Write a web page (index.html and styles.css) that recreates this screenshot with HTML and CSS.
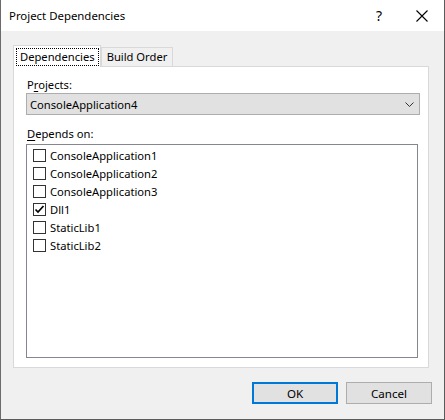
FILE: index.html
```html
<!DOCTYPE html>
<html>
<head>
<meta charset="utf-8">
<link rel="stylesheet" href="styles.css">
</head>
<body>
<div class="window">
  <div class="titlebar">
    <span class="title">Project Dependencies</span>
    <span class="help">?</span>
    <svg class="close" width="12" height="12" viewBox="0 0 12 12"><path d="M0.5 0.5 L11.5 11.5 M11.5 0.5 L0.5 11.5" stroke="#000" stroke-width="1.1" fill="none"/></svg>
  </div>
  <div class="body">
    <div class="tabs">
      <div class="tab active"><span class="focus">Dependencies</span></div>
      <div class="tab">Build Order</div>
    </div>
    <div class="panel">
      <div class="label">P<u>r</u>ojects:</div>
      <div class="combo">
        <span>ConsoleApplication4</span>
        <svg class="chev" width="9" height="5" viewBox="0 0 9 5"><path d="M0.5 0.5 L4.5 4.5 L8.5 0.5" stroke="#333" stroke-width="1" fill="none"/></svg>
      </div>
      <div class="label label2"><u>D</u>epends on:</div>
      <div class="list">
        <div class="row"><span class="cb"></span>ConsoleApplication1</div>
        <div class="row"><span class="cb"></span>ConsoleApplication2</div>
        <div class="row"><span class="cb"></span>ConsoleApplication3</div>
        <div class="row"><span class="cb"><svg width="11" height="11" viewBox="0 0 11 11"><path d="M1.5 5.5 L4 8 L9.5 2" stroke="#000" stroke-width="1.7" fill="none"/></svg></span>Dll1</div>
        <div class="row"><span class="cb"></span>StaticLib1</div>
        <div class="row"><span class="cb"></span>StaticLib2</div>
      </div>
    </div>
    <div class="footer">
      <button class="btn primary">OK</button>
      <button class="btn">Cancel</button>
    </div>
  </div>
</div>
</body>
</html>
```

FILE: styles.css
```css
html, body {
  margin: 0;
  padding: 0;
  background: #f0f0f0;
}
.window {
  width: 445px;
  height: 420px;
  box-sizing: border-box;
  border-left: 1px solid #6b6b6b;
  border-right: 1px solid #5a5a5a;
  border-bottom: 1px solid #5a5a5a;
  background: #f0f0f0;
  font-family: "Segoe UI", "Noto Sans", sans-serif;
  font-size: 11.2px;
  color: #000;
  display: flex;
  flex-direction: column;
}
.titlebar {
  height: 31px;
  background: #fff;
  display: flex;
  align-items: center;
  padding-left: 8px;
  box-sizing: border-box;
}
.title {
  flex: 1;
  font-size: 11.4px;
}
.help {
  font-size: 14px;
  margin-right: 34px;
}
.close {
  margin-right: 16px;
}
.body {
  flex: 1;
  padding: 14px 15px 0 12px;
  display: flex;
  flex-direction: column;
}
.tabs {
  display: flex;
  align-items: flex-end;
  height: 21px;
  position: relative;
  z-index: 1;
}
.tab {
  height: 19px;
  box-sizing: border-box;
  border: 1px solid #d9d9d9;
  border-bottom: none;
  padding: 0 5px;
  line-height: 18px;
  background: #f0f0f0;
}
.tab.active {
  height: 22px;
  margin-bottom: -1px;
  background: #fff;
  padding: 2px 1px 0 2px;
  line-height: 16px;
}
.focus {
  display: block;
  border: 1px dotted #000;
  padding: 0 3px;
  height: 16px;
}
.panel {
  height: 302px;
  box-sizing: border-box;
  border: 1px solid #d9d9d9;
  background: #fff;
  padding: 10px 8px 0 12px;
  display: flex;
  flex-direction: column;
}
.label {
  line-height: 15px;
  padding-left: 1px;
}
.label u { text-underline-offset: 2px; }
.combo {
  margin-top: 1px;
  height: 22px;
  box-sizing: border-box;
  border: 1px solid #adadad;
  background: #e1e1e1;
  display: flex;
  align-items: center;
  padding: 0 5px 0 3px;
}
.combo span { flex: 1; }
.label2 {
  margin-top: 11px;
}
.list {
  margin-top: 3px;
  height: 214px;
  width: 392px;
  box-sizing: border-box;
  border: 1px solid #828790;
  padding: 1px 0 0 6px;
}
.row {
  height: 18px;
  display: flex;
  align-items: center;
}
.cb {
  width: 13px;
  height: 13px;
  box-sizing: border-box;
  border: 1px solid #333;
  background: #fff;
  margin-right: 4px;
  display: flex;
  align-items: center;
  justify-content: center;
}
.footer {
  display: flex;
  justify-content: flex-end;
  margin-top: 14px;
  margin-right: -3px;
  gap: 8px;
}
.btn {
  width: 86px;
  height: 22px;
  box-sizing: border-box;
  border: 1px solid #adadad;
  background: #e1e1e1;
  font-family: "Segoe UI", "Noto Sans", sans-serif;
  font-size: 11.6px;
  color: #000;
  padding: 0;
  margin: 0;
}
.btn.primary {
  border: 2px solid #0078d7;
}
```
